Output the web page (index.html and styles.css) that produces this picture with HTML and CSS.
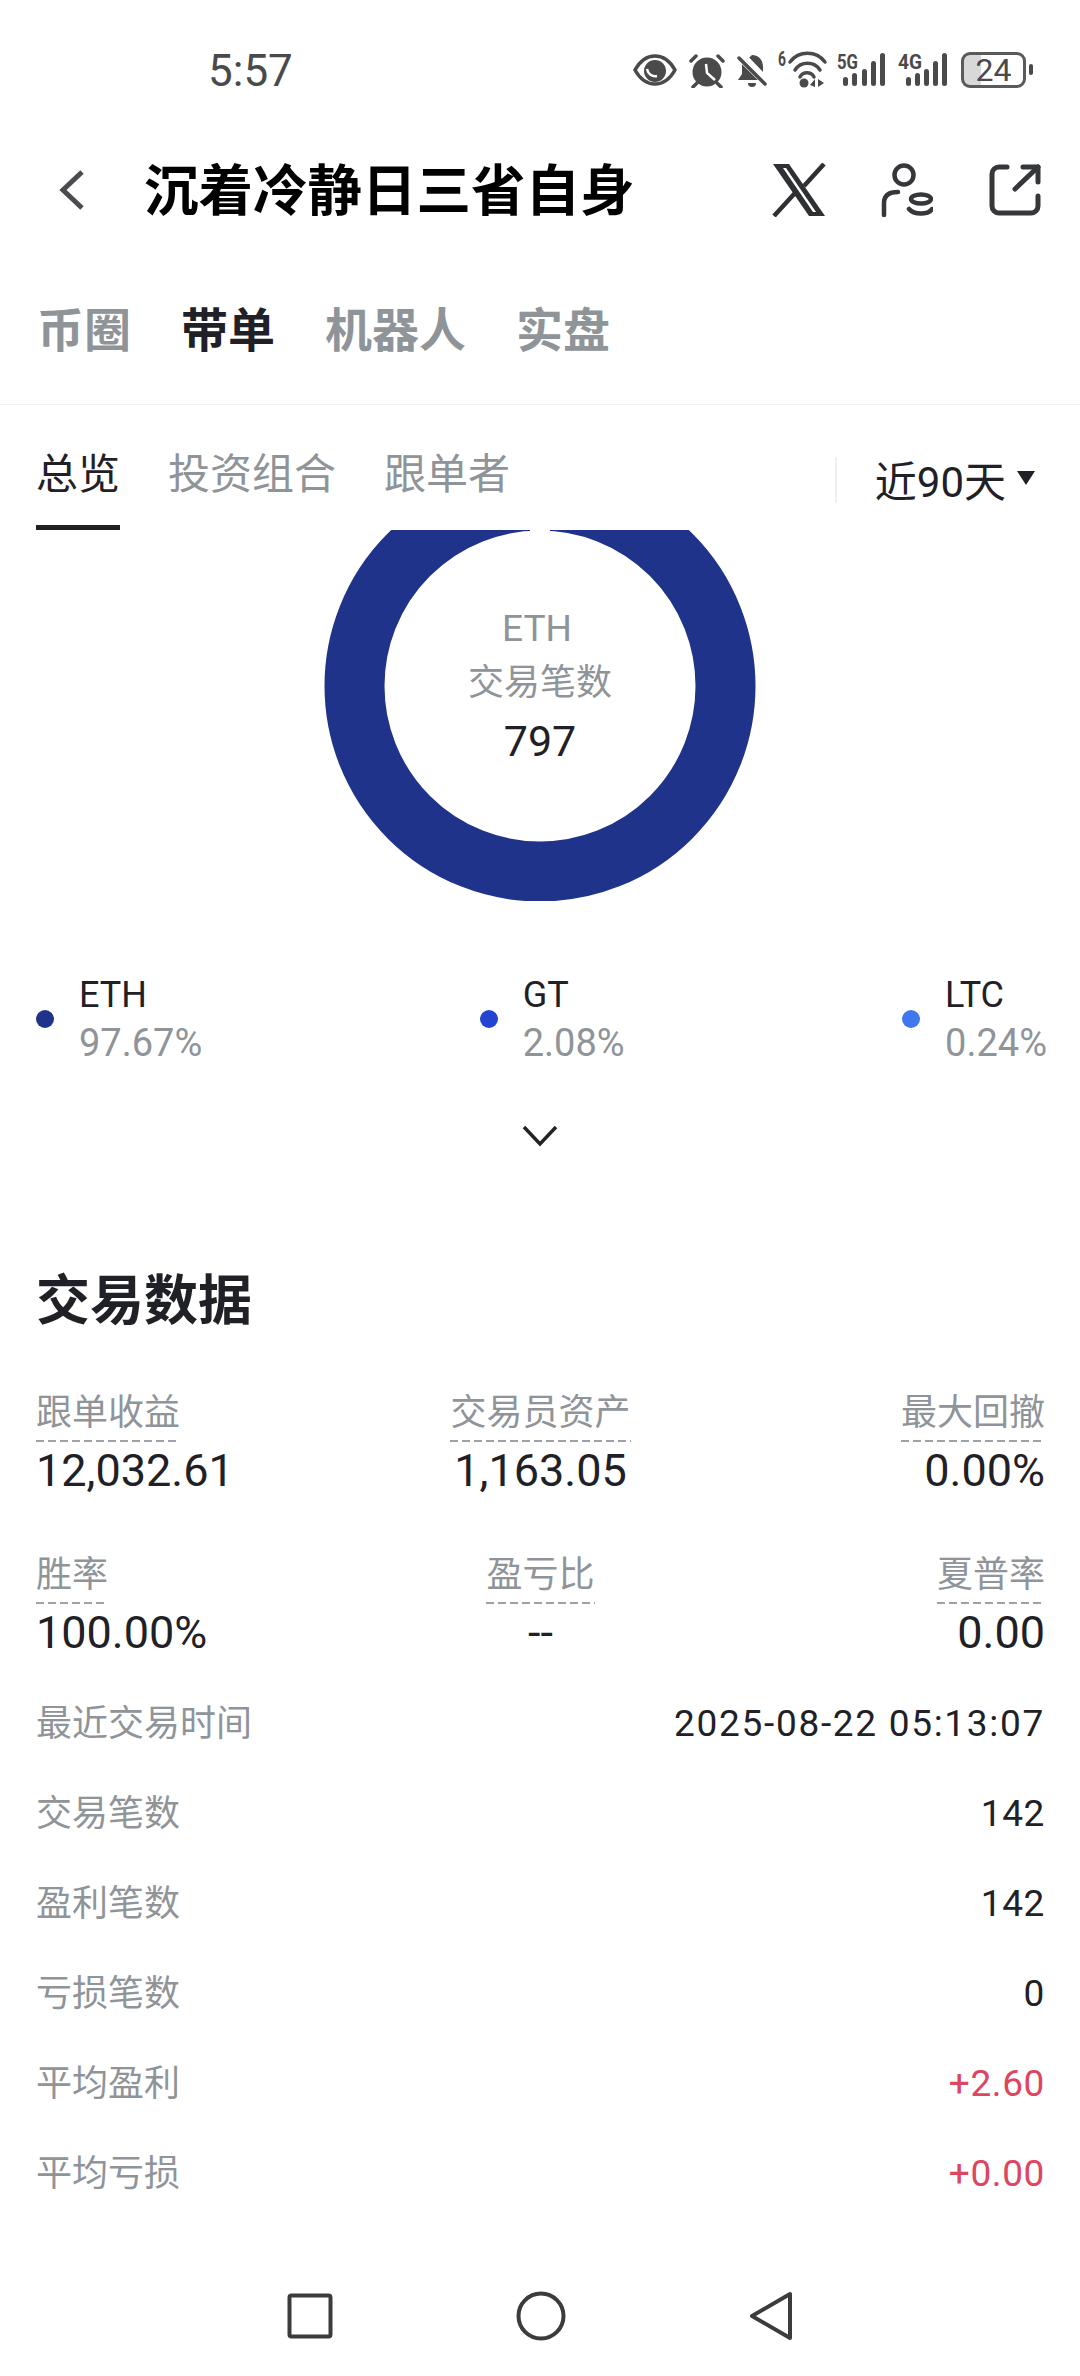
FILE: index.html
```html
<!DOCTYPE html>
<html>
    <head>
        <meta charset="utf-8">
        <link rel="stylesheet" href="styles.css">
    </head>
    <body>
        <div class="status">
            <span class="time">5:57</span>
            <div class="status_icons">
                <svg width="44" height="32" viewBox="0 0 44 32"><path d="M2 16C7 7 14 2 22 2s15 5 20 14c-5 9-12 14-20 14S7 25 2 16z" fill="none" stroke="#4a4a4a" stroke-width="3.500"/><circle cx="22" cy="17" r="11" fill="#4a4a4a"/><path d="M14 15c1 5 5 8 10 7" fill="none" stroke="#fff" stroke-width="2.500"/></svg>
                <svg width="38" height="35" viewBox="0 0 38 35"><circle cx="19" cy="19" r="14.500" fill="#4a4a4a"/><path d="M18 11l1 9 8 7" fill="none" stroke="#fff" stroke-width="2.500"/><path d="M3 8l5-5M35 8l-5-5M9 30l-4 4M29 30l4 4" stroke="#4a4a4a" stroke-width="3.500" stroke-linecap="round"/></svg>
                <svg width="30" height="35" viewBox="0 0 30 35"><path d="M15 2c7 0 11 5 11 12v7l3 6H1l4-6V11z" fill="#4a4a4a"/><path d="M11 30h8a4 4 0 0 1-8 0z" fill="#4a4a4a"/><path d="M6 1l25 26" stroke="#fff" stroke-width="4"/><path d="M2 4l27 27" stroke="#fff" stroke-width="6"/><path d="M2 5l26 26" stroke="#4a4a4a" stroke-width="3.500" stroke-linecap="round"/></svg>
                <svg class="net" width="48" height="36" viewBox="0 0 48 36"><text x="0" y="14" class="net_txt" textLength="8" lengthAdjust="spacingAndGlyphs">6</text><g fill="none" stroke="#4a4a4a" stroke-width="3.500" stroke-linecap="round"><path d="M12 10a22 22 0 0 1 35 0"/><path d="M17 18a15 15 0 0 1 25 0"/><path d="M22 25a8 8 0 0 1 14 0"/></g><circle cx="26" cy="31" r="4.500" fill="#4a4a4a"/><path d="M37 35v-8l-5 6zM40 27v8l6-4z" fill="#4a4a4a"/></svg>
                <svg class="net" width="50" height="34" viewBox="0 0 50 34"><text x="0" y="16" class="net_txt" textLength="21" lengthAdjust="spacingAndGlyphs">5G</text><g fill="#4a4a4a"><rect x="6" y="24" width="5" height="9" rx="2.500"/><rect x="15" y="20" width="5" height="13" rx="2.500"/><rect x="25" y="16" width="5" height="17" rx="2.500"/><rect x="34" y="8" width="5" height="25" rx="2.500"/><rect x="43" y="0" width="5" height="33" rx="2.500"/></g></svg>
                <svg class="net" width="52" height="34" viewBox="0 0 52 34"><text x="0" y="16" class="net_txt" textLength="24" lengthAdjust="spacingAndGlyphs">4G</text><g fill="#4a4a4a"><rect x="8" y="24" width="5" height="9" rx="2.500"/><rect x="17" y="20" width="5" height="13" rx="2.500"/><rect x="26" y="16" width="5" height="17" rx="2.500"/><rect x="35" y="8" width="5" height="25" rx="2.500"/><rect x="44" y="0" width="5" height="33" rx="2.500"/></g></svg>
                <div class="battery">24</div>
            </div>
        </div>

        <div class="header">
            <svg class="back" width="28" height="40" viewBox="0 0 28 40"><path d="M24 2L5 20l19 18" fill="none" stroke="#4b4b4f" stroke-width="5"/></svg>
            <h1 class="title">沉着冷静日三省自身</h1>
            <svg class="x_icon" width="54" height="54" viewBox="0 0 54 54"><path d="M1 1h16l36 52H37z" fill="#2e3033"/><path d="M11 5h3l30 44h-3z" fill="#fff"/><path d="M52 1L32 23M23 30L2 53" stroke="#2e3033" stroke-width="4.500"/></svg>
            <svg class="user_icon" width="52" height="54" viewBox="0 0 52 54"><g fill="none" stroke="#35373a" stroke-width="4.500" stroke-linecap="round"><circle cx="23" cy="12" r="9.500"/><path d="M3 52V40c0-8 5-11 14-11"/><ellipse cx="40" cy="36" rx="10" ry="4.500"/><path d="M28 46c5 6 19 6 23 0"/></g></svg>
            <svg class="share_icon" width="52" height="52" viewBox="0 0 52 52"><g fill="none" stroke="#35373a" stroke-width="5" stroke-linecap="round" stroke-linejoin="round"><path d="M18 3H10a7 7 0 0 0-7 7v32a7 7 0 0 0 7 7h32a7 7 0 0 0 7-7v-10"/><path d="M26 25L49 3"/><path d="M34 3h15v15"/></g></svg>
        </div>

        <div class="tabs">
            <span class="tab">币圈</span>
            <span class="tab tab_on">带单</span>
            <span class="tab">机器人</span>
            <span class="tab">实盘</span>
        </div>

        <div class="subbar">
            <span class="sub sub_on">总览</span>
            <span class="sub">投资组合</span>
            <span class="sub">跟单者</span>
            <div class="range">
                <span>近90天</span>
                <i class="caret"></i>
            </div>
        </div>

        <div class="chart">
            <svg class="donut" width="1080" height="371" viewBox="0 530 1080 371">
                <circle cx="540" cy="686" r="185.500" fill="none" stroke="#20338a" stroke-width="60"/>
                <rect x="530" y="530" width="20" height="2" fill="#fff"/>
            </svg>
            <div class="donut_txt">
                <div class="d_coin">ETH</div>
                <div class="d_label">交易笔数</div>
                <div class="d_num">797</div>
            </div>
        </div>

        <div class="legend">
            <div class="lg_item">
                <i class="dot dot1"></i>
                <div><div class="lg_name">ETH</div><div class="lg_pct">97.67%</div></div>
            </div>
            <div class="lg_item">
                <i class="dot dot2"></i>
                <div><div class="lg_name">GT</div><div class="lg_pct">2.08%</div></div>
            </div>
            <div class="lg_item">
                <i class="dot dot3"></i>
                <div><div class="lg_name">LTC</div><div class="lg_pct">0.24%</div></div>
            </div>
        </div>

        <div class="more">
            <svg width="36" height="24" viewBox="0 0 36 24"><path d="M2 3l16 17L34 3" fill="none" stroke="#222428" stroke-width="3.500"/></svg>
        </div>

        <h2 class="sec_title">交易数据</h2>

        <div class="stats">
            <div class="stat"><span class="st_label">跟单收益</span><div class="st_val">12,032.61</div></div>
            <div class="stat st_mid"><span class="st_label">交易员资产</span><div class="st_val">1,163.05</div></div>
            <div class="stat st_end"><span class="st_label">最大回撤</span><div class="st_val">0.00%</div></div>
            <div class="stat"><span class="st_label">胜率</span><div class="st_val">100.00%</div></div>
            <div class="stat st_mid"><span class="st_label">盈亏比</span><div class="st_val">--</div></div>
            <div class="stat st_end"><span class="st_label">夏普率</span><div class="st_val">0.00</div></div>
        </div>

        <div class="rows">
            <div class="row"><span class="r_label">最近交易时间</span><span class="r_val r_date">2025-08-22 05:13:07</span></div>
            <div class="row"><span class="r_label">交易笔数</span><span class="r_val">142</span></div>
            <div class="row"><span class="r_label">盈利笔数</span><span class="r_val">142</span></div>
            <div class="row"><span class="r_label">亏损笔数</span><span class="r_val">0</span></div>
            <div class="row"><span class="r_label">平均盈利</span><span class="r_val red">+2.60</span></div>
            <div class="row"><span class="r_label">平均亏损</span><span class="r_val red">+0.00</span></div>
        </div>

        <div class="navbar">
            <svg width="46" height="46" viewBox="0 0 46 46"><rect x="2.500" y="2.500" width="41" height="41" rx="2" fill="none" stroke="#3c3c3c" stroke-width="4"/></svg>
            <svg width="50" height="50" viewBox="0 0 50 50"><circle cx="25" cy="25" r="22.500" fill="none" stroke="#3c3c3c" stroke-width="4"/></svg>
            <svg width="44" height="50" viewBox="0 0 44 50"><path d="M41 3v44L3 25z" fill="none" stroke="#3c3c3c" stroke-width="4" stroke-linejoin="round"/></svg>
        </div>
    </body>
</html>
```
FILE: styles.css
```css
body {
    font-family: Roboto, "Noto Sans CJK SC", sans-serif;
    background-color: #fff;
    width: 1080px;
    height: 2376px;
    margin: 0;
    overflow: hidden;
    color: #1f2126;
}

.status {
    height: 140px;
    display: flex;
    align-items: center;
    padding-left: 208px;
    box-sizing: border-box;
}
.time {
    font-size: 44px;
    color: #4a4a4a;
    padding-top: 2px;
}
.status_icons {
    margin-left: auto;
    margin-right: 54px;
    display: flex;
    align-items: center;
    gap: 11px;
}
.net {
    overflow: visible;
}
.net_txt {
    font-size: 21px;
    font-weight: 700;
    fill: #4a4a4a;
}
.battery {
    position: relative;
    width: 65px;
    height: 36px;
    box-sizing: border-box;
    border: 3px solid #5a5a5a;
    border-radius: 9px;
    background-image: linear-gradient(to right, #d8d8d8 17px, #fff 17px);
    font-size: 32px;
    line-height: 30px;
    text-align: center;
    color: #4a4a4a;
}
.battery::after {
    content: "";
    position: absolute;
    left: 65px;
    top: 9px;
    width: 4px;
    height: 11px;
    border-radius: 2px;
    background-color: #4a4a4a;
}

.header {
    height: 100px;
    display: flex;
    align-items: center;
    padding-left: 58px;
    padding-right: 39px;
}
.title {
    margin: 0 0 8px 58px;
    font-size: 54.500px;
    font-weight: 700;
    color: #000;
    flex: 1;
}
.user_icon {
    margin-left: 55px;
}
.share_icon {
    margin-left: 56px;
}

.tabs {
    display: flex;
    gap: 50px;
    padding: 61px 37px 44px;
    line-height: 60px;
    border-bottom: 1px solid #f0f1f2;
    height: 59px;
}
.tab {
    font-size: 47px;
    font-weight: 700;
    color: #8f9499;
}
.tab_on {
    color: #1f2126;
}

.subbar {
    display: flex;
    gap: 48px;
    padding: 0 36px;
    height: 125px;
    box-sizing: border-box;
}
.sub {
    font-size: 42px;
    color: #8f9499;
    line-height: 52px;
    padding-top: 44px;
    height: 76px;
}
.sub_on {
    color: #1f2126;
    border-bottom: 5px solid #1f2126;
}
.range {
    margin-left: auto;
    display: flex;
    align-items: center;
    box-sizing: border-box;
    height: 46px;
    margin-top: 52px;
    padding-bottom: 4px;
    border-left: 2px solid #eeeff0;
    padding-left: 38px;
    font-size: 42px;
    color: #1f2126;
    margin-right: 9px;
}
.caret {
    margin-left: 11px;
    border-left: 9px solid transparent;
    border-right: 9px solid transparent;
    border-top: 14px solid #1f2126;
}

.chart {
    position: relative;
    height: 371px;
}
.donut {
    display: block;
}
.donut_txt {
    position: absolute;
    left: 0;
    right: 0;
    top: 72px;
    text-align: center;
}
.d_coin {
    font-size: 37px;
    color: #8f9499;
    line-height: 54px;
    margin-right: 6px;
}
.d_label {
    font-size: 36px;
    color: #8f9499;
    line-height: 54px;
}
.d_num {
    font-size: 43px;
    line-height: 62px;
}

.legend {
    margin-top: 70px;
    padding: 0 33px 0 36px;
    display: flex;
    justify-content: space-between;
}
.lg_item {
    display: flex;
    align-items: center;
    gap: 25px;
}
.dot {
    width: 18px;
    height: 18px;
    border-radius: 50%;
}
.dot1 { background-color: #20338a; }
.dot2 { background-color: #2344d2; }
.dot3 { background-color: #3f78ee; }
.lg_name {
    font-size: 36px;
    line-height: 48px;
}
.lg_pct {
    font-size: 38px;
    line-height: 48px;
    color: #8f9499;
}

.more {
    margin-top: 57px;
    height: 24px;
    text-align: center;
}

.sec_title {
    margin: 119px 0 0;
    padding-left: 36px;
    font-size: 54px;
    line-height: 70px;
    font-weight: 700;
}

.stats {
    margin-top: 51px;
    padding: 0 35px 0 36px;
    display: grid;
    grid-template-columns: 1fr 1fr 1fr;
    row-gap: 54px;
}
.stat {
    text-align: left;
}
.st_mid {
    text-align: center;
}
.st_end {
    text-align: right;
}
.st_label {
    display: inline-block;
    font-size: 36px;
    line-height: 50px;
    padding-bottom: 4px;
    color: #8f9499;
    background-image: linear-gradient(to right, #9ea2a6 8px, transparent 8px);
    background-size: 12px 2px;
    background-position: left bottom;
    background-repeat: repeat-x;
}
.st_val {
    font-size: 45px;
    line-height: 50px;
    margin-top: 4px;
}

.rows {
    margin-top: 21px;
    padding: 0 35px 0 36px;
}
.row {
    height: 90px;
    display: flex;
    justify-content: space-between;
    align-items: center;
    line-height: 50px;
}
.r_label {
    font-size: 36px;
    color: #8f9499;
}
.r_val {
    font-size: 37px;
    letter-spacing: 0.600px;
}
.r_date {
    letter-spacing: 1.700px;
}
.red {
    color: #de4560;
}

.navbar {
    margin-top: 47px;
    height: 100px;
    display: flex;
    align-items: center;
    justify-content: center;
    gap: 183px;
}
```
